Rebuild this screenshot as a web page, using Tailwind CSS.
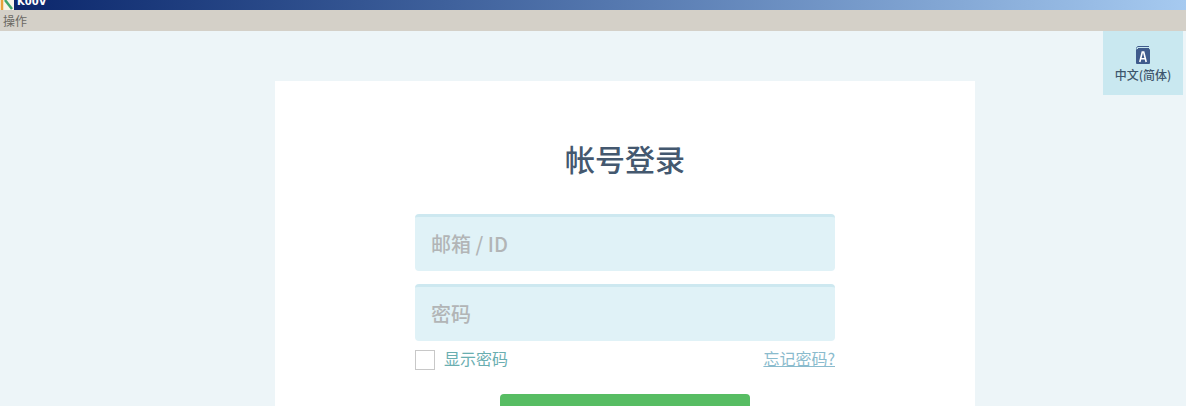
<!DOCTYPE html>
<html lang="zh-CN">
<head>
    <meta charset="UTF-8">
    <title>帐号登录</title>
    <script src="https://cdn.jsdelivr.net/npm/@tailwindcss/browser@4"></script>
</head>
<body class="h-[406px] overflow-hidden bg-[#edf5f8] font-['Noto_Sans_CJK_SC','Noto_Sans',sans-serif]">

    <!-- Title bar -->
    <div class="h-[10px] overflow-hidden flex items-start bg-linear-to-r from-[#0a246a] to-[#a6caf0]">
        <div class="w-[14px] h-[10px] bg-[#f7f5ea] overflow-hidden shrink-0">
            <svg width="14" height="10" viewBox="0 0 14 10"><path d="M2 0v10" stroke="#e8a33a" stroke-width="2.5"/><path d="M5 0l7 9" stroke="#3fa66a" stroke-width="2.5"/></svg>
        </div>
        <span class="ml-[3px] -mt-[5px] text-white text-[10px] leading-[14px] font-bold font-['DejaVu_Sans',sans-serif]">K00V</span>
    </div>

    <!-- Menu bar -->
    <div class="h-[21px] bg-[#d4d0c8] text-[#6a6862] text-[12px] leading-[21px] pl-[3px]">操作</div>

    <!-- Page -->
    <div class="relative h-[375px] overflow-hidden pt-[50px]">
        <div class="absolute top-0 right-[3px] w-[80px] h-[64px] bg-[#c9e8f0] flex flex-col items-center pt-[15px]">
            <svg width="14" height="18" viewBox="0 0 14 18">
                <path d="M2 .5h11M.5 2.5c0-1 .7-2 1.5-2M2 2.5h11" fill="none" stroke="#3f5b8c" stroke-width="1"/>
                <rect y="3" width="14" height="15" rx="1" fill="#3f5b8c"/>
                <path d="M3.8 16l2.5-10h1.4l2.5 10M5 12.8h4" fill="none" stroke="#fff" stroke-width="1.6"/>
            </svg>
            <span class="mt-[1px] text-[12px] leading-[20px] font-medium text-[#3e566c]">中文(简体)</span>
        </div>

        <!-- Login card -->
        <div class="w-[700px] ml-[275px] h-[400px] bg-white px-[140px]">
            <h1 class="pt-[55px] text-center text-[30px] leading-[44px] font-medium text-[#44586f]">帐号登录</h1>

            <div class="mt-[34px] h-[57px] rounded-[4px] border-t-[3px] border-[#cde8f0] bg-[#e0f2f7] pl-4 text-[20px] leading-[53px] font-medium text-[#b2b5b6]">邮箱 / ID</div>
            <div class="mt-[13px] h-[57px] rounded-[4px] border-t-[3px] border-[#cde8f0] bg-[#e0f2f7] pl-4 text-[20px] leading-[53px] font-medium text-[#b2b5b6]">密码</div>

            <div class="mt-[9px] flex items-center justify-between h-[20px]">
                <label class="flex items-center gap-[9px] text-[16px] leading-[18px] text-[#6aaeb0]">
                    <span class="w-[20px] h-[20px] border border-[#c8c8c8] bg-white"></span>
                    <span class="-mt-[4px]">显示密码</span>
                </label>
                <a class="-mt-[4px] text-[16px] leading-[18px] text-[#8abbcd] underline">忘记密码?</a>
            </div>

            <div class="mt-[24px] mx-auto w-[250px] h-[50px] rounded-[4px] bg-[#57bd63]"></div>
        </div>
    </div>

</body>
</html>
